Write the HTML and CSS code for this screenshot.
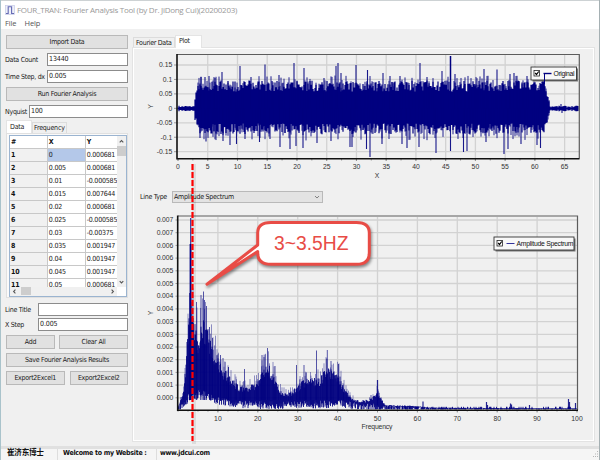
FILE: index.html
```html
<!DOCTYPE html>
<html lang="en">
<head>
    <meta charset="UTF-8">
    <meta name="viewport" content="width=device-width, initial-scale=1.0">
    <title>FOUR_TRAN: Fourier Analysis Tool</title>
    <link rel="stylesheet" href="styles.css">
</head>
<body>
    <div class="window">
        <header class="titlebar">
            <svg class="app-icon" viewBox="0 0 10 10">
                <rect x="0.5" y="0.5" width="9" height="9" fill="#eef0fa" stroke="#c5c9e6" stroke-width="0.7" />
                <path d="M1 8.5h2.2V1.8h3.4v6.7H9" fill="none" stroke="#6469b4" stroke-width="1.1" />
            </svg>
            <span class="title">FOUR_TRAN: Fourier Analysis Tool (by Dr. JiDong Cui)(20200203)</span>
        </header>
        <nav class="menu"><span>File</span><span>Help</span></nav>

        <main class="main">
            <aside class="sidebar">
                <button class="btn">Import Data</button>
                <div class="field field-count"><label>Data Count</label><div class="input">13440</div></div>
                <div class="field field-dx"><label>Time Step, dx</label><div class="input">0.005</div></div>
                <button class="btn btn-run">Run Fourier Analysis</button>
                <div class="field field-nyquist"><label>Nyquist</label><div class="input">100</div></div>

                <div class="tabs data-tabs">
                    <span class="tab active">Data</span>
                    <span class="tab">Frequency</span>
                </div>
                <div class="tab-page">
                    <div class="grid">
                        <div class="grid-body">
                            <table>
                                <thead><tr><th>#</th><th>X</th><th>Y</th></tr></thead>
                                <tbody>
                                    <tr><th>1</th><td class="selected">0</td><td>0.000681</td></tr>
                                    <tr><th>2</th><td>0.005</td><td>0.000681</td></tr>
                                    <tr><th>3</th><td>0.01</td><td>-0.000585</td></tr>
                                    <tr><th>4</th><td>0.015</td><td>0.007644</td></tr>
                                    <tr><th>5</th><td>0.02</td><td>0.000681</td></tr>
                                    <tr><th>6</th><td>0.025</td><td>-0.000585</td></tr>
                                    <tr><th>7</th><td>0.03</td><td>-0.00375</td></tr>
                                    <tr><th>8</th><td>0.035</td><td>0.001947</td></tr>
                                    <tr><th>9</th><td>0.04</td><td>0.001947</td></tr>
                                    <tr><th>10</th><td>0.045</td><td>0.001947</td></tr>
                                    <tr><th>11</th><td>0.05</td><td>0.000681</td></tr>
                                </tbody>
                            </table>
                            <div class="vscroll">
                                <svg viewBox="0 0 10 10"><path d="M3 6.5l2-2 2 2" /></svg>
                                <i class="thumb"></i>
                                <svg class="end" viewBox="0 0 10 10"><path d="M3 4l2 2 2-2" /></svg>
                            </div>
                        </div>
                        <div class="hscroll">
                            <svg viewBox="0 0 10 10"><path d="M6 3l-2 2 2 2" /></svg>
                            <i class="thumb"></i>
                            <svg class="end" viewBox="0 0 10 10"><path d="M4 3l2 2-2 2" /></svg>
                        </div>
                    </div>
                </div>

                <div class="field field-title"><label>Line Title</label><div class="input"></div></div>
                <div class="field field-step"><label>X Step</label><div class="input">0.005</div></div>
                <div class="btn-row">
                    <button class="btn btn-add">Add</button>
                    <button class="btn">Clear All</button>
                </div>
                <button class="btn btn-save">Save Fourier Analysis Results</button>
                <div class="btn-row btn-row-export">
                    <button class="btn">Export2Excel1</button>
                    <button class="btn">Export2Excel2</button>
                </div>
            </aside>

            <section class="content">
                <div class="tabs plot-tabs">
                    <span class="tab">Fourier Data</span>
                    <span class="tab active">Plot</span>
                </div>
                <div class="plot-page">
                    <svg id="time-chart" class="chart" width="459" height="141" viewBox="134 49 459 141"></svg>
                    <div class="line-type">
                        <label>Line Type</label>
                        <div class="select">
                            <span>Amplitude Spectrum</span>
                            <svg viewBox="0 0 10 10"><path d="M2.5 3.8L5 6.3l2.5-2.5" /></svg>
                        </div>
                    </div>
                    <svg id="freq-chart" class="chart" width="459" height="236" viewBox="134 204 459 236"></svg>
                </div>
            </section>
        </main>

        <footer class="statusbar">
            <span class="author">崔济东博士</span>
            <span class="welcome">Welcome to my Website :</span>
            <span class="site">www.jdcui.com</span>
            <svg class="grip" viewBox="0 0 7 7">
                <path d="M5 0h1v1h-1zM3 2.5h1v1h-1zM5 2.5h1v1h-1zM1 5h1v1h-1zM3 5h1v1h-1zM5 5h1v1h-1z" fill="#b5b5b5" />
            </svg>
        </footer>

        <!-- marker line and callout over the plots -->
        <svg class="annotation" width="600" height="460" viewBox="0 0 600 460">
            <path class="marker-shadow" d="M194 164V444" />
            <path class="marker" d="M192.500 164V441" />
            <path class="callout" d="M271 222.500H356.500Q369.300 222.500 369.300 233V253Q369.300 264.300 356.500 264.300H271Q257.700 264.300 257.700 253V251.500L207 284.300L257.700 245V233Q257.700 222.500 271 222.500Z" />
            <text class="callout-text" x="274" y="249.500">3~3.5HZ</text>
        </svg>
    </div>
    <script src="plot.js"></script>
</body>
</html>
```

FILE: styles.css
```css
* {
    margin: 0;
    padding: 0;
    box-sizing: border-box;
}

body {
    font-family: 'DejaVu Sans Condensed', 'DejaVu Sans', 'Noto Sans CJK SC', sans-serif;
    font-stretch: condensed;
    font-size: 7px;
    letter-spacing: -0.28px;
    color: #1a1a1a;
    overflow: hidden;
}

.window {
    position: relative;
    display: flex;
    flex-direction: column;
    width: 600px;
    height: 460px;
    background: #f0f0f0;
    border-left: 1px solid #a9c3cb;
    border-right: 1px solid #a5b0b3;
}

.titlebar {
    display: flex;
    align-items: center;
    gap: 2px;
    height: 18px;
    padding-left: 4px;
    background: #fff;
    border-top: 1px solid #cdd2d4;
}

.app-icon {
    width: 10px;
    height: 10px;
}

.title {
    font-family: 'Open Sans', sans-serif;
    font-stretch: normal;
    font-size: 8px;
    letter-spacing: -0.27px;
    color: #999;
}

.menu {
    display: flex;
    gap: 8px;
    height: 11px;
    padding-left: 4px;
    background: #fff;
    font-family: 'Open Sans', sans-serif;
    font-stretch: normal;
    font-size: 7.5px;
    line-height: 11px;
    letter-spacing: -0.1px;
    color: #555;
}

.main {
    display: flex;
    flex: 1;
    padding: 6px 5px 0 4px;
}

.sidebar {
    display: flex;
    flex-direction: column;
    width: 123px;
}

.btn {
    display: block;
    flex: 1;
    height: 14px;
    margin-left: 1px;
    min-height: 14px;
    max-height: 14px;
    font: inherit;
    letter-spacing: inherit;
    color: #1a1a1a;
    background: #e1e1e1;
    border: 1px solid #b9b9b9;
    line-height: 13px;
}

.field {
    display: flex;
    align-items: center;
    height: 13px;
}

.field label {
    white-space: nowrap;
}

.input {
    height: 13px;
    margin-left: auto;
    padding-left: 1px;
    line-height: 11.5px;
    letter-spacing: -0.1px;
    background: #fff;
    border: 1px solid #8c8c8c;
}

.field-count {
    margin-top: 4px;
}

.field-dx {
    margin-top: 4px;
}

.field-count .input,
.field-dx .input {
    width: 81px;
}

.btn-run {
    margin-top: 4px;
}

.field-nyquist {
    margin-top: 4px;
}

.field-nyquist .input {
    width: 99px;
}

.tabs {
    display: flex;
    align-items: flex-end;
}

.tab {
    height: 11px;
    padding: 0 3px;
    line-height: 11px;
    background: #f0f0f0;
    border: 1px solid #dcdcdc;
    border-bottom: none;
}

.tab.active {
    background: #fff;
    border-color: #e4e4e4;
    z-index: 1;
}

.data-tabs {
    height: 13px;
    margin: 2px 0 0 1px;
}

.data-tabs .tab {
    width: 35px;
    padding-left: 1px;
    letter-spacing: -0.2px;
}

.data-tabs .tab.active {
    width: 26px;
    height: 13px;
    padding-left: 3px;
    line-height: 12px;
}

.tab-page {
    height: 165px;
    margin-left: 1px;
    padding: 1px 2px;
    background: #fafafa;
    border: 1px solid #e0e0e0;
}

.grid {
    width: 118px;
    height: 162px;
    background: #fff;
    border: 1px solid #9bb4d0;
    letter-spacing: -0.2px;
}

.grid-body {
    display: flex;
    height: 151px;
    overflow: hidden;
}

table {
    width: 107px;
    table-layout: fixed;
    border-collapse: separate;
    border-spacing: 0;
}

th,
td {
    width: 37.5px;
    height: 13px;
    padding: 0 0 0 1px;
    text-align: left;
    line-height: 12px;
    white-space: nowrap;
    overflow: hidden;
    border-right: 1px solid #c8c8c8;
    border-bottom: 1px solid #c8c8c8;
}

th {
    font-weight: bold;
    color: #111;
}

tbody th {
    background: #f1f1f1;
}

th:last-child,
td:last-child {
    width: 31px;
    border-right: none;
}

.selected {
    background: #b4c8e9;
}

.vscroll {
    display: flex;
    flex-direction: column;
    width: 9px;
    background: #f0f0f0;
}

.vscroll svg,
.hscroll svg {
    width: 9px;
    height: 10px;
    fill: none;
    stroke: #555;
    stroke-width: 1.2;
}

.vscroll .thumb {
    height: 10px;
    background: #cdcdcd;
}

.vscroll .end {
    margin-top: auto;
}

.hscroll {
    display: flex;
    width: 107px;
    height: 9px;
    background: #f0f0f0;
}

.hscroll svg {
    height: 9px;
}

.hscroll .thumb {
    width: 10px;
    height: 8px;
    margin-left: 2px;
    background: #cdcdcd;
}

.hscroll .end {
    margin-left: auto;
}

.field-title {
    margin-top: 5px;
}

.field-step {
    margin-top: 2px;
}

.field-title .input,
.field-step .input {
    width: 90px;
}

.btn-row {
    display: flex;
    gap: 3px;
    height: 14px;
    margin-top: 4px;
}

.btn-row .btn-add {
    flex: 0 0 49px;
}

.btn-save {
    margin-top: 4px;
}

.btn-row-export {
    gap: 4px;
}

.content {
    display: flex;
    flex-direction: column;
    width: 461px;
    margin-left: 5px;
}

.plot-tabs {
    height: 13px;
}

.plot-tabs .tab {
    width: 42px;
    padding-left: 2px;
    white-space: nowrap;
}

.plot-tabs .tab.active {
    width: 27px;
    height: 13px;
    padding-left: 3px;
    line-height: 11px;
}

.plot-page {
    height: 393px;
    border: 1px solid #fff;
    outline: 1px solid #e3e3e3;
}

.chart {
    display: block;
    font-family: 'Liberation Sans', sans-serif;
    font-stretch: normal;
    font-size: 6.8px;
    letter-spacing: 0;
    fill: #333;
}

.line-type {
    display: flex;
    align-items: center;
    height: 14px;
    padding-left: 6px;
}

.line-type label {
    width: 32px;
}

.select {
    display: flex;
    align-items: center;
    justify-content: space-between;
    width: 151px;
    height: 12px;
    padding: 0 1px;
    background: #e3e3e3;
    border: 1px solid #b9b9b9;
}

.select svg {
    width: 8px;
    height: 8px;
    fill: none;
    stroke: #666;
}

.grid-line {
    stroke: #d2d2d2;
    stroke-width: 1.3;
}

.frame {
    fill: none;
    stroke: #5c5c5c;
    stroke-width: 1.2;
}

.axis {
    fill: none;
    stroke: #111;
    stroke-width: 1.6;
}

.tick {
    stroke: #777;
    stroke-width: 0.7;
}

.spikes {
    fill: none;
    stroke: #000080;
}

.legend-box {
    fill: #f8f8f8;
    stroke: #333;
    stroke-width: 0.9;
}

.legend-shadow {
    fill: #777;
}

.check {
    fill: none;
    stroke: #000;
    stroke-width: 1.2;
}

.statusbar {
    display: flex;
    height: 14px;
    background: #f5f5f5;
    border-top: 3px solid #e0e0e0;
    font-weight: bold;
    line-height: 8px;
    color: #111;
}

.statusbar span {
    height: 11px;
    padding-left: 5px;
    white-space: nowrap;
}

.statusbar .author {
    width: 56px;
    padding-left: 6px;
    font-size: 7.6px;
}

.welcome {
    width: 99px;
    border-left: 1px solid #ddd;
}

.site {
    flex: 1;
    border-left: 1px solid #ddd;
}

.statusbar .site {
    padding-left: 3px;
}

.grip {
    width: 7px;
    height: 7px;
    margin-top: 2px;
}

.annotation {
    position: absolute;
    top: 0;
    left: -1px;
}

.marker {
    stroke: #f00;
    stroke-width: 2.2;
    stroke-dasharray: 6 2;
}

.marker-shadow {
    stroke: rgba(0, 0, 0, 0.08);
    stroke-width: 4;
}

.callout {
    fill: #fff;
    stroke: #e84c46;
    stroke-width: 3;
    stroke-linejoin: round;
    filter: drop-shadow(1px 2px 1.5px rgba(0, 0, 0, 0.45));
}

.callout-text {
    font-family: 'Liberation Sans', sans-serif;
    font-stretch: normal;
    font-size: 19.3px;
    letter-spacing: 0;
    fill: #e84c46;
}
```

FILE: plot.js
```js
let seed = 7;
function rand() {
    seed = (seed * 16807) % 2147483647;
    return seed / 2147483647;
}

// linear interpolation through a list of [x, y] points
function interp(points, x) {
    for (let i = 1; i < points.length; i++) {
        const [x0, y0] = points[i - 1];
        const [x1, y1] = points[i];
        if (x <= x1) return y0 + (y1 - y0) * (x - x0) / (x1 - x0);
    }
    return points[points.length - 1][1];
}

function text(x, y, str, anchor, extra) {
    return `<text x="${x}" y="${y}" text-anchor="${anchor}" ${extra || ''}>${str}</text>`;
}

function line(x1, y1, x2, y2, cls) {
    return `<path class="${cls}" d="M${x1} ${y1}L${x2} ${y2}"/>`;
}

function spikes(list, base, width, opacity) {
    const d = list.map(([x, y]) => `M${x} ${base}V${y}`).join('');
    return `<path class="spikes" d="${d}" stroke-width="${width}" opacity="${opacity}"/>`;
}

function legend(x, y, w, h, label, lineWidth, size) {
    return `<rect class="legend-shadow" x="${x + 1.5}" y="${y + 1.5}" width="${w}" height="${h}"/>` +
        `<rect class="legend-box" x="${x}" y="${y}" width="${w}" height="${h}"/>` +
        `<rect x="${x + 3}" y="${y + 3.5}" width="5.5" height="5.5" fill="#fff" stroke="#222" stroke-width="0.8"/>` +
        `<path class="check" d="M${x + 4.2} ${y + 6}l1.3 1.5 2.2-3"/>` +
        `<path class="spikes" d="M${x + 12.5} ${y + 6.5}h8" stroke-width="${lineWidth}"/>` +
        text(x + 22.5, y + 9, label, 'start', `textLength="${size}" fill="#111"`);
}

function drawTimeChart() {
    let out = '';
    for (let v = 0; v <= 65; v += 5) {
        const x = 178 + v * 5.948;
        if (v) out += line(x, 55, x, 158, 'grid-line');
        out += line(x, 159, x, 161, 'tick');
        out += text(x, 169, v, 'middle');
    }
    for (let i = 0; i < 26; i++) {
        const x = 178 + i * 14.87;
        out += line(x, 159, x, 160.5, 'tick');
    }
    ['0.15', '0.1', '0.05', '0', '-0.05', '-0.1', '-0.15'].forEach((label, i) => {
        const y = 65 + i * 14.45;
        out += line(177, y, 579, y, 'grid-line');
        out += line(174, y, 177, y, 'tick');
        out += text(172.3, y + 2.4, label, 'end');
    });

    let body = '';
    const thin = [];
    for (let x = 178; x < 578.5; x += 1) {
        let up, down;
        if (x < 194.5 || x > 549.5) {
            up = down = 1 + rand() * 1.8;
        } else {
            const ramp = Math.min(1, 0.45 + (x - 194.5) / 9, 0.2 + (549.5 - x) / 7);
            up = (17 + rand() * 11) * ramp;
            down = (15 + rand() * 11) * ramp;
            if (rand() < 0.4) thin.push([x, 108.5 - (20 + rand() * 13) * ramp]);
            if (rand() < 0.4) thin.push([x, 108.5 + (18 + rand() * 14) * ramp]);
        }
        body += `M${x} ${(108.5 - up).toFixed(1)}V${(108.5 + down).toFixed(1)}`;
    }
    out += `<path class="spikes" d="${body}" stroke-width="1.2"/>`;
    out += spikes(thin, 108.5, 1, 0.85);

    const peaks = [
        [201, 77], [205, 77], [209, 76], [215, 78], [222, 72], [240, 66], [251, 77], [265, 64.5], [279, 75],
        [294, 63], [304, 68], [324, 78], [336, 66], [338, 63], [341, 73], [356, 65], [367.5, 70], [383, 73],
        [390, 76], [400, 76], [420, 63], [427, 77], [442, 71], [455, 74], [484, 69], [497, 69.5],
        [510, 74], [514, 73], [527, 76], [544, 72], [561, 104], [562, 113],
        [200, 138], [206, 141.5], [223, 141], [230, 145], [236.5, 144], [245, 139], [259.5, 142], [270, 139],
        [280, 147], [290, 149], [296, 146], [303, 148], [317, 143], [331, 141], [350, 147], [352, 147],
        [366.5, 149], [370, 157], [382, 144], [402, 144], [407, 148], [419, 147], [436, 153], [450.5, 151],
        [463.5, 152], [467, 151], [486, 142], [504, 154], [508, 149], [521, 144], [537, 145], [540.5, 148]
    ];
    out += spikes(peaks, 108.5, 1.1, 0.9);
    out += spikes([[450.5, 56]], 108.5, 1.5, 1);

    out += '<path class="frame" d="M177 54.5H579.3V158.5"/>';
    out += '<path class="axis" d="M177 54V158.7H579.5"/>';
    out += text(377, 177.5, 'X', 'middle');
    out += text(0, 0, 'Y', 'middle', 'transform="translate(152.5 106.5) rotate(-90)"');
    out += legend(531, 67, 45.5, 13, 'Original', 1.4, 21);
    out += '<path class="spikes" d="M544.5 73V84" stroke-width="1"/>';
    document.getElementById('time-chart').innerHTML = out;
}

function drawFreqChart() {
    let out = '';
    for (let v = 10; v <= 100; v += 10) {
        const x = 178 + v * 3.99;
        if (v < 100) out += line(x, 217, x, 410, 'grid-line');
        out += line(x, 410, x, 412.5, 'tick');
        out += text(x, 420.7, v, 'middle');
    }
    for (let i = 0; i <= 40; i++) {
        const x = 178 + i * 9.975;
        out += line(x, 410, x, 411.7, 'tick');
    }
    for (let i = 0; i < 15; i++) {
        const y = 220 + i * 12.7;
        out += line(178, y, 577, y, 'grid-line');
        out += line(175.5, y, 178, y, 'tick');
        out += text(173.2, y + 2.2, `0.00${Math.floor((15 - i) / 2)}`, 'end', 'textLength="16.5"');
    }

    const top = [
        [178, 408], [181, 397], [184, 388], [186, 358], [188, 322], [190, 300], [192, 302], [194, 320], [196, 326],
        [199, 332], [201, 320], [204, 318], [207, 326], [210, 335], [213, 343], [217, 354], [220, 362], [225, 370],
        [230, 377], [240, 385], [248, 386], [255, 382], [260, 377], [264, 366], [268, 362], [272, 370], [276, 380],
        [280, 389], [287, 394], [294, 389], [300, 382], [308, 377], [314, 378], [320, 377], [326, 368], [332, 369],
        [339, 373], [343, 385], [348, 393], [355, 400], [365, 400], [372, 398], [377, 390], [381, 398], [386, 405],
        [410, 405.5], [430, 407.5], [577, 408.5]
    ];
    const bottom = [
        [178, 409], [183, 407], [186, 402], [190, 396], [196, 396], [202, 392], [210, 398], [220, 401],
        [232, 403], [250, 405], [300, 405], [340, 404], [360, 407], [400, 409], [577, 409.5]
    ];
    let body = '';
    const thin = [];
    for (let x = 178.5; x < 577; x += 0.5) {
        const t = interp(top, x);
        const b = interp(bottom, x);
        const h = 409 - t;
        const y0 = Math.min(t + rand() * h * 0.3, 408.5);
        const y1 = Math.max(Math.min(b + (rand() - 0.5) * 8, 409.3), y0 + 0.5);
        body += `M${x} ${y0.toFixed(1)}V${y1.toFixed(1)}`;
        if (t < 399 && rand() < 0.3) thin.push([x, t - rand() * h * 0.3]);
        if (t >= 405 && rand() < 0.2) body += `M${x} 409V406.8`;
    }
    out += `<path class="spikes" d="${body}" stroke-width="0.85"/>`;
    out += spikes(thin, 400, 0.7, 0.6);
    out += spikes([
        [189.5, 293], [196.5, 302], [201, 295], [203.5, 291.5], [204.5, 300], [206.5, 306], [209.5, 327],
        [212.5, 338], [220.5, 355], [223, 358], [228.5, 367], [244.5, 369], [262, 355], [264, 357], [267.5, 348],
        [275, 366], [296.5, 365], [304, 365], [316.5, 350.5], [327.3, 350], [331, 361], [338.5, 364], [371, 395]
    ], 400, 1, 0.65);
    out += spikes([
        [377.5, 380], [423, 401.5], [486.5, 402], [487.5, 405], [510.5, 403.5], [511.5, 404.5],
        [529.5, 405], [568.5, 399], [569.5, 402], [575.5, 403]
    ], 409, 1.2, 0.85);
    out += spikes([[190.7, 218]], 400, 1.3, 0.75);
    out += spikes([[190.5, 244]], 400, 1.8, 1);

    out += '<path class="frame" d="M178 216H577.5V410"/>';
    out += '<path class="axis" d="M177.7 215.5V410.2H578"/>';
    out += text(377, 429, 'Frequency', 'middle', 'textLength="31"');
    out += text(0, 0, 'Y', 'middle', 'transform="translate(152.5 313) rotate(-90)"');
    out += legend(494, 237, 80, 13, 'Amplitude Spectrum', 0.8, 57);
    document.getElementById('freq-chart').innerHTML = out;
}

drawTimeChart();
drawFreqChart();
```
